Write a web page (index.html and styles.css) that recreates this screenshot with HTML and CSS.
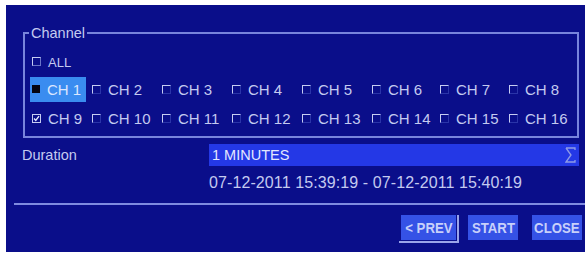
FILE: index.html
```html
<!DOCTYPE html>
<html>
<head>
<meta charset="utf-8">
<link rel="stylesheet" href="styles.css">
</head>
<body>
<div class="panel">
  <fieldset class="channel">
    <legend>Channel</legend>
    <div class="row-all"><span class="item"><span class="cb cb-all"></span>ALL</span></div>
    <div class="grid">
      <span class="item sel"><span class="cb cb-black"></span>CH 1</span>
      <span class="item"><span class="cb"></span>CH 2</span>
      <span class="item"><span class="cb"></span>CH 3</span>
      <span class="item"><span class="cb"></span>CH 4</span>
      <span class="item"><span class="cb"></span>CH 5</span>
      <span class="item"><span class="cb"></span>CH 6</span>
      <span class="item"><span class="cb"></span>CH 7</span>
      <span class="item"><span class="cb"></span>CH 8</span>
      <span class="item"><svg class="cb-check" width="9" height="9" viewBox="0 0 9 9"><rect x="0.5" y="0.5" width="8" height="8" fill="none" stroke="#c6ccf2" stroke-width="1"/><path d="M2 4.5 L3.8 6.5 L7 2.2" fill="none" stroke="#e6e9ff" stroke-width="1.4"/></svg>CH 9</span>
      <span class="item"><span class="cb"></span>CH 10</span>
      <span class="item"><span class="cb"></span>CH 11</span>
      <span class="item"><span class="cb"></span>CH 12</span>
      <span class="item"><span class="cb"></span>CH 13</span>
      <span class="item"><span class="cb"></span>CH 14</span>
      <span class="item"><span class="cb"></span>CH 15</span>
      <span class="item"><span class="cb"></span>CH 16</span>
    </div>
  </fieldset>
  <div class="duration-row">
    <span class="label">Duration</span>
    <div class="select">
      <span>1 MINUTES</span>
      <svg class="sel-icon" width="11" height="18" viewBox="0 0 11 18"><path d="M1 2 H10 V4 M1 2 L6 9 L1 16 H10 V14" fill="none" stroke="#8f9be6" stroke-width="1.3"/></svg>
    </div>
  </div>
  <div class="range">07-12-2011 15:39:19 - 07-12-2011 15:40:19</div>
  <div class="sep"></div>
  <div class="buttons">
    <span class="focus"><span class="btn"><span class="btn-text">&lt; PREV</span></span></span>
    <span class="btn start"><span class="btn-text">START</span></span>
    <span class="btn close"><span class="btn-text">CLOSE</span></span>
  </div>
</div>
</body>
</html>
```
FILE: styles.css
```css
html, body {
  margin: 0;
  padding: 0;
  background: #ffffff;
}
body {
  font-family: "Liberation Sans", Arial, sans-serif;
  color: #c4caf0;
}
.panel {
  margin: 5px 2px 0 6px;
  height: 247px;
  box-sizing: border-box;
  padding: 20px 6px 0 17px;
  background: #0a0e8a;
  overflow: hidden;
}
.channel {
  margin: 0;
  border: 2px solid #7884dc;
  padding: 0 6px 5px 5px;
  min-width: 0;
}
.channel legend {
  padding: 0 2px;
  margin-left: -1px;
  font-size: 14.5px;
  line-height: 16px;
  color: #c4caf0;
}
.row-all {
  margin-top: 9px;
  height: 24px;
  display: flex;
  align-items: center;
}
.row-all .item {
  font-size: 13px;
}
.grid {
  margin-top: 3px;
  display: grid;
  grid-template-columns: 60px 70px 70px 70px 70px 68px 69px auto;
  row-gap: 4px;
}
.item {
  justify-self: start;
  display: inline-flex;
  align-items: center;
  gap: 7px;
  height: 25px;
  padding: 0 5px 0 2px;
  font-size: 15px;
  color: #c4caf0;
  white-space: nowrap;
}
.item.sel {
  background: #3a8cf0;
  color: #dbe6ff;
}
.cb {
  display: inline-block;
  width: 7px;
  height: 7px;
  border-top: 1px solid #c6ccf2;
  border-left: 1px solid #c6ccf2;
  border-right: 1px solid #2a34a8;
  border-bottom: 1px solid #2a34a8;
  margin-top: -1px;
}
.cb.cb-all {
  border-right-color: #6a74c8;
  border-bottom-color: #6a74c8;
}
.cb.cb-black {
  width: 8px;
  height: 8px;
  border: 0;
  background: #050510;
}
.cb-check {
  display: block;
  margin-top: -1px;
}
.duration-row {
  margin-top: 6px;
  display: flex;
  align-items: center;
  height: 22px;
}
.label {
  width: 187px;
  margin-left: -1px;
  font-size: 14.5px;
  color: #c4caf0;
}
.select {
  flex: 1;
  height: 22px;
  display: flex;
  align-items: center;
  justify-content: space-between;
  padding: 0 3px 0 3px;
  background: #2438e6;
  color: #e2e6ff;
  font-size: 14.5px;
}
.sel-icon {
  display: block;
}
.range {
  margin-top: 8px;
  margin-left: 186px;
  height: 18px;
  line-height: 18px;
  font-size: 16px;
  letter-spacing: 0.1px;
  color: #c4caf0;
  white-space: nowrap;
}
.sep {
  margin: 11px -6px 0 -9px;
  height: 2px;
  background: #7f8be0;
}
.buttons {
  margin: 10px -3px 0 0;
  display: flex;
  justify-content: flex-end;
  align-items: flex-start;
}
.btn {
  display: inline-flex;
  align-items: center;
  justify-content: center;
  width: 50px;
  height: 25px;
  background: #3552e6;
  color: #c8d0fa;
  font-family: "Liberation Sans", Arial, sans-serif;
  font-weight: bold;
  font-size: 15px;
  white-space: nowrap;
}
.btn-text {
  display: inline-block;
  transform: scaleX(0.88);
}
.focus {
  display: inline-block;
  padding: 0 1px 1px 2px;
  border-right: 2px solid #9aa4ea;
  border-bottom: 2px solid #9aa4ea;
}
.focus .btn {
  width: 55px;
}
.btn.start {
  margin-left: 9px;
}
.btn.close {
  margin-left: 14px;
}
```
